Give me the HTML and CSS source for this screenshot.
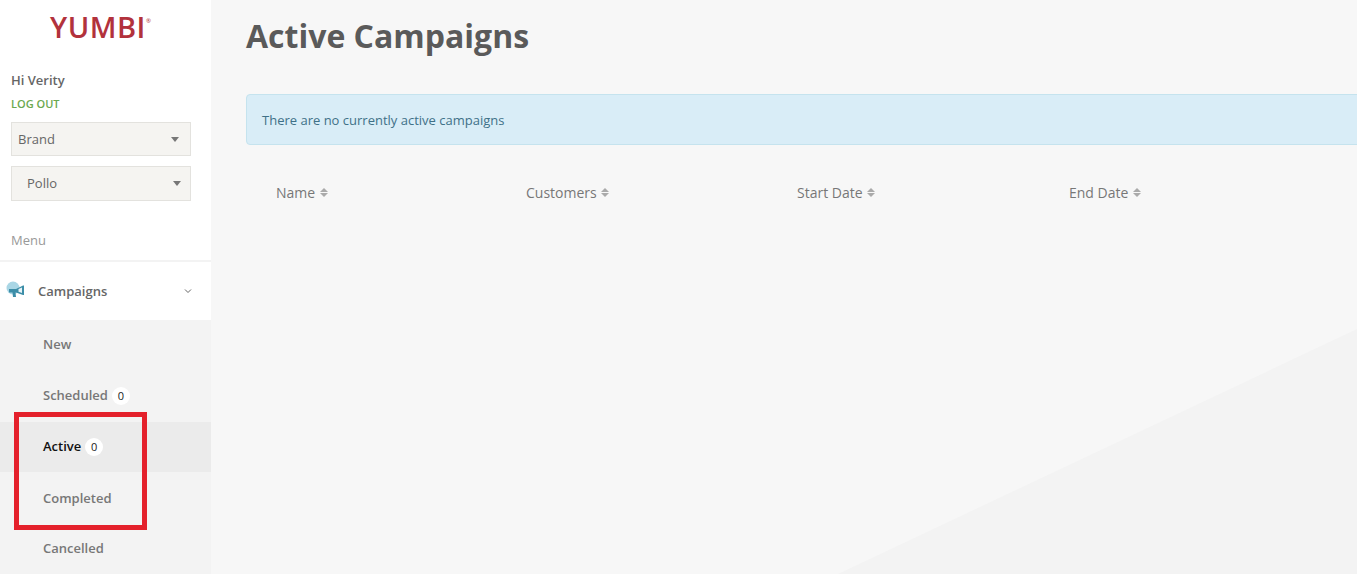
FILE: index.html
```html
<!DOCTYPE html>
<html lang="en">
<head>
    <meta charset="UTF-8">
    <meta name="viewport" content="width=device-width, initial-scale=1.0">
    <title>Active Campaigns</title>
    <link rel="stylesheet" href="styles.css">
</head>
<body>

    <div class="page">
        <aside class="sidebar">
            <div class="logo">YUMBI<span class="logo-mark">®</span></div>

            <div class="user">
                <div class="user-name">Hi Verity</div>
                <a class="logout" href="#">LOG OUT</a>
            </div>

            <div class="picker picker-brand">
                <span>Brand</span>
                <span class="picker-arrow"></span>
            </div>
            <div class="picker picker-pollo">
                <span>Pollo</span>
                <span class="picker-arrow"></span>
            </div>

            <div class="menu-title">Menu</div>

            <div class="menu-head">
                <svg class="menu-icon" width="20" height="18" viewBox="0 0 20 18">
                    <circle cx="7" cy="8" r="6.5" fill="#a9d6e5"/>
                    <path d="M3 9 L10 9 L17 5.5 L18 5.5 L18 15 L17 15 L10 12.5 L9.5 12.5 L10 17 L7 17 L6.5 12.5 L3 12.5 Z" fill="#3d8ea8"/>
                    <path d="M12.5 9 L16 7.5 L16 13 L12.5 11.7 Z" fill="#e8f3f7"/>
                </svg>
                <span class="menu-label">Campaigns</span>
                <svg class="menu-chevron" width="8" height="6" viewBox="0 0 8 6">
                    <path d="M1 1.5 L4 4.5 L7 1.5" fill="none" stroke="#666" stroke-width="1"/>
                </svg>
            </div>

            <ul class="submenu">
                <li>New</li>
                <li>Scheduled <span class="count">0</span></li>
                <li class="current">Active <span class="count">0</span></li>
                <li>Completed</li>
                <li class="last">Cancelled</li>
            </ul>
        </aside>

        <main class="content">
            <h1>Active Campaigns</h1>
            <div class="alert">There are no currently active campaigns</div>
            <div class="table-head">
                <div>Name <span class="sort"></span></div>
                <div>Customers <span class="sort"></span></div>
                <div>Start Date <span class="sort"></span></div>
                <div>End Date <span class="sort"></span></div>
            </div>
        </main>
    </div>

    <!-- red box drawn over the screenshot -->
    <div class="highlight"></div>

</body>
</html>
```

FILE: styles.css
```css
html, body {
    margin: 0;
    height: 100%;
    overflow: hidden;
}
body {
    font-family: "Open Sans", Arial, sans-serif;
    color: #666;
    background: #f7f7f7;
    position: relative;
}
.page {
    display: flex;
    height: 574px;
}

/* sidebar */
.sidebar {
    width: 211px;
    flex: none;
    background: #fff;
    display: flex;
    flex-direction: column;
    overflow: hidden;
}
.logo {
    height: 71px;
    padding: 1px 10px 0 0;
    box-sizing: border-box;
    text-align: center;
    font-size: 29px;
    font-weight: 600;
    line-height: 41px;
    letter-spacing: 0.5px;
    color: #b2323c;
}
.logo-mark {
    font-size: 6px;
    font-weight: 400;
    vertical-align: 15px;
    letter-spacing: 0;
}
.user {
    padding-left: 11px;
}
.user-name {
    font-size: 13px;
    font-weight: 600;
    line-height: 18px;
    color: #666;
}
.logout {
    display: block;
    margin-top: 7px;
    font-size: 11px;
    font-weight: 600;
    line-height: 15px;
    color: #6aa84f;
    text-decoration: none;
}
.picker {
    margin-left: 11px;
    width: 180px;
    box-sizing: border-box;
    display: flex;
    justify-content: space-between;
    align-items: center;
    background: #f5f4f1;
    border: 1px solid #e3e2de;
    font-size: 13px;
    color: #666;
}
.picker-brand {
    height: 34px;
    margin-top: 11px;
    padding: 0 11px 0 6px;
}
.picker-pollo {
    height: 35px;
    margin-top: 10px;
    padding: 0 9px 1px 15px;
}
.picker-arrow {
    width: 0;
    height: 0;
    border-left: 4.5px solid transparent;
    border-right: 4.5px solid transparent;
    border-top: 5px solid #777;
}
.menu-title {
    margin-top: 30px;
    padding-left: 11px;
    font-size: 13px;
    line-height: 18px;
    color: #999;
    padding-bottom: 11px;
    border-bottom: 2px solid #f3f3f3;
}
.menu-head {
    height: 58px;
    display: flex;
    align-items: center;
}
.menu-icon {
    margin-left: 6px;
    margin-top: -4px;
}
.menu-label {
    margin-left: 12px;
    font-size: 13px;
    font-weight: 600;
    color: #666;
}
.menu-chevron {
    margin-left: auto;
    margin-right: 19px;
    margin-top: -1px;
}
.submenu {
    list-style: none;
    margin: 0;
    padding: 0;
    background: #f3f3f3;
    flex: 1;
}
.submenu li {
    height: 51px;
    box-sizing: border-box;
    padding-left: 43px;
    display: flex;
    align-items: center;
    gap: 4px;
    font-size: 13px;
    font-weight: 600;
    color: #777;
}
.submenu li:first-child {
    height: 49px;
    padding-bottom: 2px;
}
.submenu li.current {
    height: 50px;
    margin-top: 2px;
    padding-bottom: 3px;
    background: #ebebeb;
    color: #111;
}
.submenu li.last {
    padding-bottom: 2px;
}
.count {
    width: 18px;
    height: 18px;
    border-radius: 50%;
    background: #fff;
    color: #222;
    font-size: 11px;
    font-weight: 400;
    line-height: 18px;
    text-align: center;
    margin-top: 2px;
}
.current .count {
    margin-top: 3px;
}

/* main area */
.content {
    flex: 1;
    min-width: 0;
    position: relative;
    padding-left: 35px;
    overflow: hidden;
}
/* pale wedge bottom right */
.content::before {
    content: "";
    position: absolute;
    left: 0;
    right: 0;
    bottom: 0;
    height: 245px;
    background: #f3f3f3;
    clip-path: polygon(627px 100%, 100% 0, 100% 100%);
}
.content > * {
    position: relative;
}
h1 {
    margin: 0;
    padding-top: 14px;
    font-size: 32px;
    font-weight: 700;
    line-height: 44px;
    color: #5a5a5a;
}
.alert {
    margin-top: 36px;
    margin-right: -20px;
    height: 51px;
    box-sizing: border-box;
    padding-left: 15px;
    display: flex;
    align-items: center;
    background: #d9edf7;
    border: 1px solid #c5e3ee;
    border-radius: 4px;
    font-size: 13px;
    color: #3f7188;
}
.table-head {
    display: grid;
    grid-template-columns: 250px 271px 272px 200px;
    margin-top: 38px;
    padding-left: 30px;
    font-size: 14px;
    line-height: 20px;
    color: #777;
}
.sort {
    display: inline-block;
    margin-left: 1px;
    width: 0;
    height: 0;
    border-left: 4px solid transparent;
    border-right: 4px solid transparent;
    border-bottom: 4px solid #aaa;
    position: relative;
    top: -6px;
}
.sort::after {
    content: "";
    position: absolute;
    left: -4px;
    top: 5px;
    width: 0;
    height: 0;
    border-left: 4px solid transparent;
    border-right: 4px solid transparent;
    border-top: 4px solid #aaa;
}

.highlight {
    position: absolute;
    left: 14px;
    top: 412px;
    width: 133px;
    height: 118px;
    box-sizing: border-box;
    border: 5px solid #e4202b;
}
```
